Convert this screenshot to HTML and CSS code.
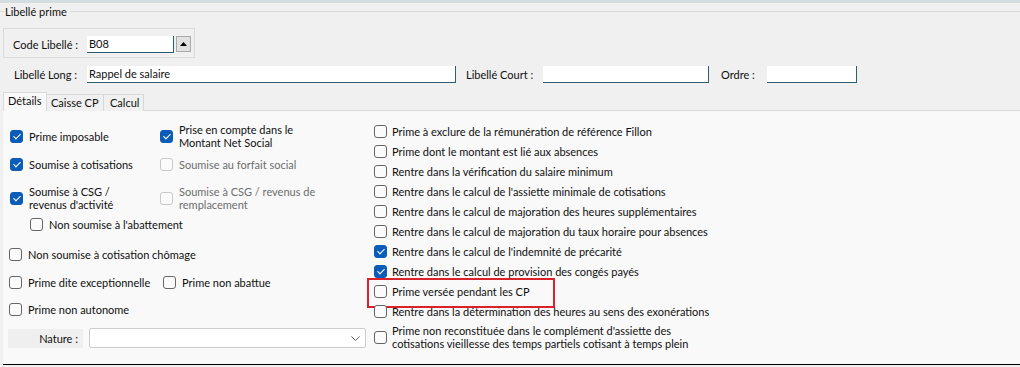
FILE: index.html
```html
<!DOCTYPE html>
<html lang="fr">
<head>
    <meta charset="UTF-8">
    <title>Libellé prime</title>
    <link rel="stylesheet" href="styles.css">
</head>
<body>
    <div class="topbar"></div>

    <div class="group">
        <div class="group-title"><span>Libellé prime</span></div>
        <div class="code-box">
            <span class="lbl code-lbl">Code Libellé :</span>
            <span class="input code-input">B08</span>
            <span class="spin"><svg width="7" height="4" viewBox="0 0 7 4"><polygon points="0,4 7,4 3.5,0" fill="#000"/></svg></span>
        </div>
        <div class="fields">
            <span class="lbl long-lbl">Libellé Long :</span>
            <span class="input long-input">Rappel de salaire</span>
            <span class="lbl court-lbl">Libellé Court :</span>
            <span class="input court-input"></span>
            <span class="lbl ordre-lbl">Ordre :</span>
            <span class="input ordre-input"></span>
        </div>
    </div>

    <div class="tabs">
        <span class="tab active t1">Détails</span>
        <span class="tab t2">Caisse CP</span>
        <span class="tab t3">Calcul</span>
    </div>

    <div class="panel">
        <div class="col-left">
            <div class="row r1">
                <div class="cb checked first"><i class="box"></i><span>Prime imposable</span></div>
                <div class="cb checked"><i class="box"></i><span class="two">Prise en compte dans le<br>Montant Net Social</span></div>
            </div>
            <div class="row r2">
                <div class="cb checked first"><i class="box"></i><span>Soumise à cotisations</span></div>
                <div class="cb disabled"><i class="box"></i><span>Soumise au forfait social</span></div>
            </div>
            <div class="row r3">
                <div class="cb checked first"><i class="box"></i><span class="two">Soumise à CSG /<br>revenus d'activité</span></div>
                <div class="cb disabled"><i class="box"></i><span class="two">Soumise à CSG / revenus de<br>remplacement</span></div>
            </div>
            <div class="row r4">
                <div class="cb"><i class="box"></i><span>Non soumise à l'abattement</span></div>
            </div>
            <div class="row r5">
                <div class="cb"><i class="box"></i><span>Non soumise à cotisation chômage</span></div>
            </div>
            <div class="row r6">
                <div class="cb wide"><i class="box"></i><span>Prime dite exceptionnelle</span></div>
                <div class="cb"><i class="box"></i><span>Prime non abattue</span></div>
            </div>
            <div class="row r7">
                <div class="cb"><i class="box"></i><span>Prime non autonome</span></div>
            </div>
            <div class="row nature">
                <span class="nature-lbl">Nature :</span>
                <span class="select">
                    <svg width="9" height="5" viewBox="0 0 9 5"><polyline points="0.5,0.5 4.5,4.5 8.5,0.5" fill="none" stroke="#5a5a5a" stroke-width="1"/></svg>
                </span>
            </div>
        </div>

        <div class="col-right">
            <div class="cb rrow"><i class="box"></i><span>Prime à exclure de la rémunération de référence Fillon</span></div>
            <div class="cb rrow"><i class="box"></i><span>Prime dont le montant est lié aux absences</span></div>
            <div class="cb rrow"><i class="box"></i><span>Rentre dans la vérification du salaire minimum</span></div>
            <div class="cb rrow"><i class="box"></i><span>Rentre dans le calcul de l'assiette minimale de cotisations</span></div>
            <div class="cb rrow"><i class="box"></i><span>Rentre dans le calcul de majoration des heures supplémentaires</span></div>
            <div class="cb rrow"><i class="box"></i><span>Rentre dans le calcul de majoration du taux horaire pour absences</span></div>
            <div class="cb rrow checked"><i class="box"></i><span>Rentre dans le calcul de l'indemnité de précarité</span></div>
            <div class="cb rrow checked"><i class="box"></i><span>Rentre dans le calcul de provision des congés payés</span></div>
            <div class="cb rrow hl"><i class="box"></i><span>Prime versée pendant les CP</span></div>
            <div class="cb rrow"><i class="box"></i><span>Rentre dans la détermination des heures au sens des exonérations</span></div>
            <div class="cb rlast"><i class="box"></i><span class="two">Prime non reconstituée dans le complément d'assiette des<br>cotisations vieillesse des temps partiels cotisant à temps plein</span></div>
        </div>
    </div>
</body>
</html>
```

FILE: styles.css
```css
* { box-sizing: border-box; }

body {
    margin: 0;
    width: 1020px;
    height: 367px;
    overflow: hidden;
    background: #f0f0f0;
    font-family: Lato, "Noto Sans", sans-serif;
    font-size: 11px;
    color: #0f0f0f;
}

.topbar { height: 3px; background: #d4dee2; }

/* groupe "Libellé prime" */
.group-title {
    height: 16px;
    display: flex;
    align-items: center;
}
.group-title::before { content: ""; width: 4px; border-top: 1px solid #d9d9d9; }
.group-title::after { content: ""; flex: 1; border-top: 1px solid #d9d9d9; }
.group-title span { padding: 0 3px 0 1px; }

.code-box {
    display: flex;
    align-items: flex-start;
    margin: 9px 0 0 3px;
    width: 192px;
    height: 30px;
    padding: 7px 0 0 9px;
    border: 1px solid #dadada;
}
.lbl { line-height: 17px; white-space: nowrap; }
.code-lbl { width: 74px; }

.input {
    height: 17px;
    padding-left: 2px;
    line-height: 16px;
    white-space: nowrap;
    background: #fff;
    border-right: 1px solid #2e5c70;
    border-bottom: 1px solid #2e5c70;
}
.code-input { width: 87px; }
.spin {
    display: flex;
    align-items: center;
    justify-content: center;
    width: 15px;
    height: 16px;
    margin-left: 2px;
    background: #e1e1e1;
    border: 1px solid #a9a9a9;
}

.fields {
    display: flex;
    height: 17px;
    margin-top: 8px;
    padding-left: 14px;
}
.long-lbl { width: 73px; }
.long-input { width: 369px; }
.court-lbl { width: 77px; margin-left: 10px; }
.court-input { width: 166px; }
.ordre-lbl { width: 46px; margin-left: 12px; }
.ordre-input { width: 90px; }

/* onglets */
.tabs {
    display: flex;
    align-items: flex-end;
    height: 19px;
    margin-top: 9px;
    padding-left: 3px;
}
.tab {
    height: 17px;
    padding-left: 4px;
    line-height: 15px;
    background: #f0f0f0;
    border: 1px solid #d9d9d9;
    border-bottom: none;
}
.tab + .tab { margin-left: -1px; }
.tab.active {
    position: relative;
    z-index: 1;
    height: 19px;
    background: #f9f9f9;
}
.t1 { width: 44px; }
.t2 { width: 58px; }
.t3 { width: 41px; padding-left: 6px; }

.panel {
    display: flex;
    height: 255px;
    margin: -1px 0 0 3px;
    background: #f9f9f9;
    border-top: 1px solid #d9d9d9;
    border-bottom: 1px solid #000;
}

/* cases à cocher */
.cb { display: flex; align-items: center; white-space: nowrap; }
.box {
    position: relative;
    flex: none;
    width: 13px;
    height: 13px;
    margin-right: 6px;
    background: #fbfbfb;
    border: 1px solid #666;
    border-radius: 3px;
}
.checked .box { background: #0b5cb8; border-color: #0b5cb8; }
.checked .box::after {
    content: "";
    position: absolute;
    left: 3.5px;
    top: 1.5px;
    width: 3px;
    height: 6px;
    border: solid #fff;
    border-width: 0 1.5px 1.5px 0;
    transform: rotate(45deg);
}
.disabled { color: #6d6d6d; }
.disabled .box { border-color: #c8c8c8; }
.two { line-height: 13px; }

.col-left {
    width: 364px;
    padding: 12px 0 0 7px;
}
.row { display: flex; align-items: center; height: 14px; }
.first { width: 150px; }
.r1 { height: 26px; }
.r2 { margin-top: 8px; }
.r3 { height: 26px; margin-top: 14px; }
.r4 { margin-top: 6px; padding-left: 20px; }
.r5 { margin: 16px 0 0 -1px; }
.r6 { margin: 14px 0 0 -1px; }
.r6 .wide { width: 154px; }
.r7 { margin: 13px 0 0 -1px; }

.nature { height: 20px; margin: 12px 0 0 -2px; }
.nature-lbl {
    width: 75px;
    height: 19px;
    padding-right: 5px;
    line-height: 19px;
    text-align: right;
    background: #efefef;
}
.select {
    display: flex;
    align-items: center;
    justify-content: flex-end;
    width: 277px;
    height: 20px;
    margin-left: 6px;
    padding-right: 5px;
    background: #fff;
    border: 1px solid #cdcdcd;
    border-radius: 2px;
}

.col-right { padding: 10px 0 0 7px; }
.col-right .box { margin-right: 5px; }
.rrow { height: 20px; }
.rlast { height: 26px; margin-top: 3px; }

.hl { position: relative; }
.hl::after {
    content: "";
    position: absolute;
    left: -7px;
    top: -3px;
    width: 184px;
    height: 26px;
    border: 2px solid #d9222a;
}
```
